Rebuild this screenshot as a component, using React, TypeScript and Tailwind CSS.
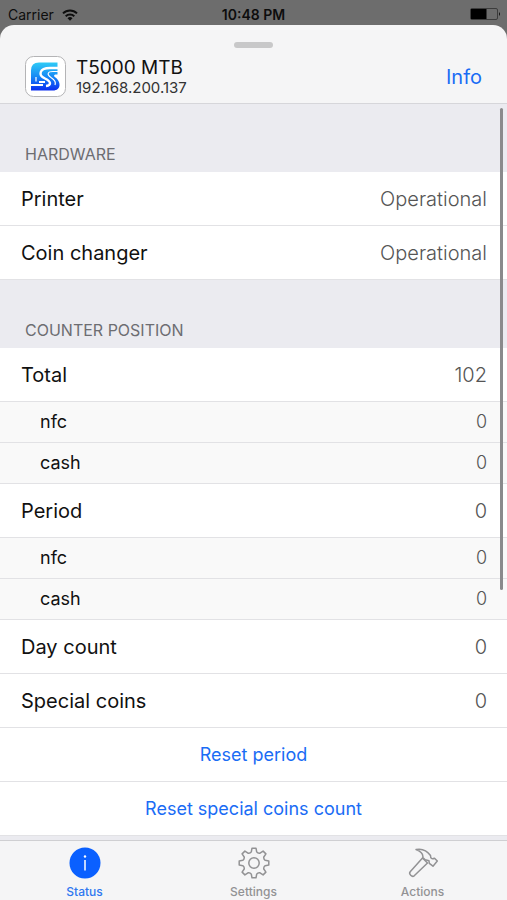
import type { ReactNode } from 'react'
import clsx from 'clsx'

type CounterRow = {
  label: string
  value: string
  sub?: boolean
}

const hardware: CounterRow[] = [
  { label: 'Printer', value: 'Operational' },
  { label: 'Coin changer', value: 'Operational' },
]

const counters: CounterRow[] = [
  { label: 'Total', value: '102' },
  { label: 'nfc', value: '0', sub: true },
  { label: 'cash', value: '0', sub: true },
  { label: 'Period', value: '0' },
  { label: 'nfc', value: '0', sub: true },
  { label: 'cash', value: '0', sub: true },
  { label: 'Day count', value: '0' },
  { label: 'Special coins', value: '0' },
]

function App() {
  return (
    <div className="flex h-screen flex-col bg-[#6d6d6d] font-['Inter','Liberation_Sans',sans-serif] text-[#111]">
      <StatusBar />

      <div className="flex min-h-0 flex-1 flex-col overflow-hidden rounded-t-[14px] bg-[#f5f5f6]">
        <Header />

        <div className="relative flex min-h-0 flex-1 flex-col">
          <main className="min-h-0 flex-1 overflow-y-auto bg-[#ebebf0] [scrollbar-width:none]">
            <Section title="Hardware" rows={hardware} />
            <Section title="Counter position" rows={counters}>
              <ActionRow label="Reset period" />
              <ActionRow label="Reset special coins count" />
            </Section>
          </main>
          {/* Scroll indicator */}
          <div
            className="pointer-events-none absolute top-1 right-1 h-[482px] w-[3px] rounded-full bg-[#8a8a8c]"
            aria-hidden="true"
          />
        </div>

        <TabBar />
      </div>
    </div>
  )
}

function StatusBar() {
  return (
    <div className="grid h-[25px] grid-cols-3 items-center px-2 pt-1 text-sm text-[#0d0d0d]">
      <div className="flex items-center gap-2">
        Carrier
        <svg width="16" height="12" viewBox="0 0 16 12" fill="none" stroke="currentColor" strokeWidth="2">
          <path d="M1 4.4a10 10 0 0 1 14 0" />
          <path d="M3.7 7.3a6.2 6.2 0 0 1 8.6 0" />
          <path d="M8 11.8 5.5 9.2a3.6 3.6 0 0 1 5 0z" fill="currentColor" stroke="none" />
        </svg>
      </div>
      <div className="text-center font-semibold">10:48 PM</div>
      <div className="-mr-0.5 flex justify-end">
        <svg width="31" height="13" viewBox="0 0 31 13">
          <rect x="0.5" y="0.5" width="27" height="11" rx="1.5" fill="none" stroke="#3c3c3c" />
          <path d="M1 1h15.500v10H1z" fill="#000" />
          <path d="M29 4q2 2 0 4z" fill="#111" />
        </svg>
      </div>
    </div>
  )
}

function Header() {
  return (
    <header className="border-b border-[#d6d6da] pt-[17px]">
      <div className="mx-auto h-1.5 w-[39px] rounded-full bg-[#c8c8c9]" />
      <div className="flex h-[55px] items-center gap-2.5 px-[25px] pt-2 pb-1.5">
        <Logo />
        <div className="flex-1">
          <h1 className="text-[19px] leading-[22px]">T5000 MTB</h1>
          <p className="text-[15px] leading-[18px] text-[#333]">192.168.200.137</p>
        </div>
        <button className="text-xl text-[#1a6cf5]">Info</button>
      </div>
    </header>
  )
}

function Logo() {
  return (
    <svg width="41" height="41" viewBox="0 0 41 41">
      <defs>
        <linearGradient id="logo-fill" x1="0" y1="0" x2="0" y2="1">
          <stop offset="0" stopColor="#2fcbf6" />
          <stop offset="0.5" stopColor="#168af5" />
          <stop offset="1" stopColor="#0a2df0" />
        </linearGradient>
      </defs>
      <rect x="0.5" y="0.5" width="40" height="40" rx="8" fill="#fff" stroke="#b4b4b6" />
      <path
        d="M14 6.500H32.500V18.500C29 18 28 19.500 30.500 21.500C36 25.500 36.500 34.500 28 34.500H6V14.500Q6 6.500 14 6.500z"
        fill="url(#logo-fill)"
      />
      <g fill="none" stroke="#fff">
        <path d="M33 12H25C14 12 13 19.500 20 22.500C26.500 25.500 26.500 29.500 21 30" strokeWidth="2.400" />
        <path d="M33 15.500H28C22.500 15.500 21.500 18.500 26 21.500C30 24 31 26.500 30 29" strokeWidth="1.200" />
        <path d="M5.500 29H18" strokeWidth="1.800" />
        <path d="M11 25.500V21" strokeWidth="1.200" />
        <path d="M14 26H20" strokeWidth="2" />
      </g>
    </svg>
  )
}

function Section({ title, rows, children }: { title: string; rows: CounterRow[]; children?: ReactNode }) {
  return (
    <section>
      <h2 className="flex h-[68px] items-end px-[25px] pb-2 text-base leading-5 text-[#6d6d72] uppercase">
        {title}
      </h2>
      <dl>
        {rows.map((row, i) => (
          <Row key={i} {...row} />
        ))}
      </dl>
      {children}
    </section>
  )
}

function Row({ label, value, sub }: CounterRow) {
  return (
    <div
      className={clsx(
        'flex items-center justify-between border-b border-[#e2e2e5] pr-5',
        sub ? 'h-[41px] bg-[#f9f9f9] pl-10 text-lg' : 'h-[54px] bg-white pl-[21px] text-xl',
      )}
    >
      <dt>{label}</dt>
      <dd className="font-light text-[#555]">{value}</dd>
    </div>
  )
}

function ActionRow({ label }: { label: string }) {
  return (
    <button className="block h-[54px] w-full border-b border-[#e2e2e5] bg-white text-lg text-[#1a6cf5]">
      {label}
    </button>
  )
}

function TabBar() {
  return (
    <nav className="grid h-[60px] grid-cols-3 border-t border-[#cfcfd2] bg-[#f5f5f6]">
      <Tab label="Status" active>
        <svg width="32" height="32" viewBox="0 0 32 32">
          <circle cx="16" cy="16" r="15.500" fill="#0a60ff" />
          <circle cx="16" cy="9.500" r="1.200" fill="#fff" />
          <path d="M16 13v10.500" stroke="#fff" strokeWidth="1.500" />
        </svg>
      </Tab>
      <Tab label="Settings">
        <svg width="32" height="32" viewBox="0 0 32 32" fill="none" stroke="currentColor" strokeWidth="1.500" strokeLinejoin="round">
          <path d="M14 1.200H18L18.700 4.800Q19.900 6.600 22 6.200L25.100 4.100L27.900 6.900L25.800 10Q25.400 12.100 27.200 13.300L30.800 14V18L27.200 18.700Q25.400 19.900 25.800 22L27.900 25.100L25.100 27.900L22 25.800Q19.900 25.400 18.700 27.200L18 30.800H14L13.300 27.200Q12.100 25.400 10 25.800L6.900 27.900L4.100 25.100L6.200 22Q6.600 19.900 4.800 18.700L1.200 18V14L4.800 13.300Q6.600 12.100 6.200 10L4.100 6.900L6.900 4.100L10 6.200Q12.100 6.600 13.300 4.800z" />
          <circle cx="16" cy="16" r="5.200" />
        </svg>
      </Tab>
      <Tab label="Actions">
        <svg width="32" height="32" viewBox="0 0 32 32" fill="#f5f5f6" stroke="currentColor" strokeWidth="1.500" strokeLinejoin="round">
          <path d="M15.500 11 20.500 16 7.200 28.800c-2.200 1.800-5.800-1.800-4-4z" />
          <path d="M9 2.500C15 1.300 20 3.500 23.500 8.500C23.500 11 24.500 12.500 27.500 11.200L30.300 14L26 19.200L22.300 16.300L22 13.800L18.200 12.800L15.800 10.500C16.500 7 14 4.500 9 2.500z" />
        </svg>
      </Tab>
    </nav>
  )
}

function Tab({ label, active, children }: { label: string; active?: boolean; children: ReactNode }) {
  return (
    <button
      aria-current={active ? 'page' : undefined}
      className={clsx(
        'flex flex-col items-center gap-1 pt-1.5 text-xs leading-[18px] font-medium',
        active ? 'text-[#2f78f0]' : 'text-[#929294]',
      )}
    >
      {children}
      {label}
    </button>
  )
}

export default App
